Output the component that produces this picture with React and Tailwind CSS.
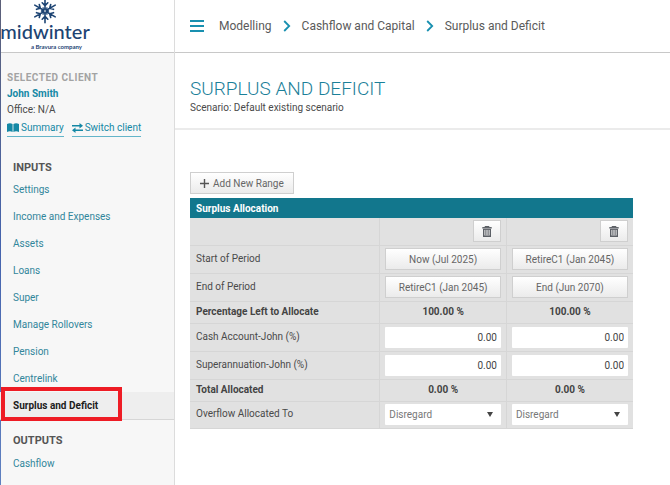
import { useState } from 'react';
import clsx from 'clsx';

const inputLinks = [
  'Settings',
  'Income and Expenses',
  'Assets',
  'Loans',
  'Super',
  'Manage Rollovers',
  'Pension',
  'Centrelink',
  'Surplus and Deficit',
];

const initialRanges = [
  { id: 1, start: 'Now (Jul 2025)', end: 'RetireC1 (Jan 2045)' },
  { id: 2, start: 'RetireC1 (Jan 2045)', end: 'End (Jun 2070)' },
];

const buttonStyle =
  'flex h-[22px] items-center justify-center border border-[#cfcfcf] bg-linear-to-b from-white to-[#ebebeb] text-[#666]';
const fieldStyle = 'block h-[21px] w-full rounded-[1px] bg-white text-[10px]';

function Snowflake() {
  return (
    <svg viewBox="0 0 26 26" className="h-[26px] w-[26px]" fill="none" stroke="#1d4473" strokeWidth="1.6" strokeLinecap="round">
      {[0, 60, 120, 180, 240, 300].map((angle) => (
        <g key={angle} transform={`rotate(${angle} 13 13)`}>
          <path d="M13 11.5V1.2M13 7.600l-2.800-2.800M13 7.600l2.800-2.800" />
          <path d="M13 11.500l-1.600-1.800M13 11.500l1.600-1.800" strokeWidth="1" />
        </g>
      ))}
    </svg>
  );
}

function BookIcon() {
  return (
    <svg viewBox="0 0 12 10" className="h-[10px] w-3" fill="#1488a5">
      <path d="M0 1Q3-.4 5.6 1v8Q3 7.700 0 9zM6.400 1Q9-.4 12 1v8Q9 7.700 6.400 9z" />
    </svg>
  );
}

function SwapIcon() {
  return (
    <svg viewBox="0 0 11 10" className="h-[10px] w-[11px]" fill="#1488a5">
      <path d="M0 2h7.500V0L11 2.700 7.500 5.400V3.400H0zM11 6.600H3.500V4.600L0 7.300 3.500 10V8H11z" />
    </svg>
  );
}

function TrashIcon() {
  return (
    <svg viewBox="0 0 10 11" className="h-[11px] w-[10px]" fill="none" stroke="#5c6066">
      <path d="M.3 1.800h9.400" strokeWidth="1.500" />
      <path d="M3 1.300V.5h4v.8" />
      <path d="M1.700 3v7.200h6.600V3" strokeWidth="1.400" />
      <path d="M3.900 3.500v6M6.100 3.500v6" strokeWidth="1.100" />
      <path d="M1.200 3.400h7.600" />
    </svg>
  );
}

function Chevron() {
  return (
    <svg viewBox="0 0 8 12" className="h-3 w-2" fill="none" stroke="#1990b0" strokeWidth="1.8">
      <path d="M1.200 1l5 5-5 5" />
    </svg>
  );
}

function Sidebar() {
  return (
    <aside className="flex w-[175px] shrink-0 flex-col border-r border-[#dcdcdc] bg-[#f7f7f7]">
      <div className="h-[53px] overflow-hidden border-b border-[#c8c8c8] bg-white">
        <a href="#home" aria-label="midwinter" className="flex w-[90px] flex-col items-center text-[#1d4473]">
          <span className="-mt-[2px] h-[22px]">
            <Snowflake />
          </span>
          <span className="font-['Lato',sans-serif] text-[20px] leading-[23px] font-medium">midwinter</span>
          <span className="self-end pr-2 font-['Lato',sans-serif] text-[6px] leading-[7px] font-bold">a Bravura company</span>
        </a>
      </div>

      <div className="pt-[17px] pl-[7px] leading-4">
        <h2 className="font-bold tracking-wider text-[#a3a3a3]">SELECTED CLIENT</h2>
        <p className="font-bold text-[#1488a5]">John Smith</p>
        <p>Office: N/A</p>
        <div className="mt-[2px] flex gap-2 text-[#1488a5]">
          <a href="#summary" className="flex items-center gap-[2px] border-b border-[#63b5c9]">
            <BookIcon />
            Summary
          </a>
          <a href="#switch" className="flex items-center gap-[2px] border-b border-[#63b5c9]">
            <SwapIcon />
            Switch client
          </a>
        </div>
      </div>

      <nav className="pt-[23px]">
        <h2 className="pl-[13px] text-[11px] leading-4 font-bold text-[#555]">INPUTS</h2>
        <ul>
          {inputLinks.map((label) => {
            const active = label === 'Surplus and Deficit';
            return (
              <li key={label} className={clsx('relative', active && 'border-b border-[#d6d6d6] bg-[#eeeeee]')}>
                <a
                  href="#inputs"
                  className={clsx(
                    'flex h-[27px] items-center pl-[13px]',
                    active ? 'font-bold text-[#1c1c1c]' : 'text-[#31869b]'
                  )}
                >
                  {label}
                </a>
                {active && (
                  <span className="pointer-events-none absolute -top-[5px] left-px h-[34px] w-[121px] border-4 border-[#ee1c25]" />
                )}
              </li>
            );
          })}
        </ul>
        <h2 className="pt-[13px] pl-[13px] text-[11px] leading-4 font-bold text-[#555]">OUTPUTS</h2>
        <a href="#cashflow" className="flex h-7 items-center pl-[13px] text-[#31869b]">
          Cashflow
        </a>
      </nav>
    </aside>
  );
}

function Breadcrumbs() {
  return (
    <header className="flex h-[53px] items-center border-b border-[#c8c8c8] pl-[15px]">
      <button type="button" aria-label="Menu" className="mr-[15px] flex w-[14px] flex-col gap-[3px]">
        <span className="h-[2px] bg-[#1990b0]" />
        <span className="h-[2px] bg-[#1990b0]" />
        <span className="h-[2px] bg-[#1990b0]" />
      </button>
      <nav className="flex items-center gap-[11px] text-[12px] text-[#5a5a5a]">
        <a href="#modelling">Modelling</a>
        <Chevron />
        <a href="#capital">Cashflow and Capital</a>
        <Chevron />
        <a href="#surplus">Surplus and Deficit</a>
      </nav>
    </header>
  );
}

function Row({ label, bold, ranges, height = 'h-7', children }) {
  return (
    <tr className={clsx('border-b border-[#d6d6d6]', height, bold && 'font-bold text-[#444]')}>
      <th scope="row" className={clsx('border-r border-[#d6d6d6] px-[6px] pb-[2px] text-left', !bold && 'font-normal')}>
        {label}
      </th>
      {ranges.map((range) => (
        <td key={range.id} className={clsx('border-r border-[#d6d6d6] px-[5px] text-center last:border-r-0', bold && 'pb-[2px]')}>
          {children(range)}
        </td>
      ))}
    </tr>
  );
}

function AllocationTable({ ranges, onRemove }) {
  return (
    <table className="mt-1 w-full max-w-[443px] table-fixed border-collapse bg-[#e1e1e1]">
      <colgroup>
        <col className="w-3/7" />
        <col />
        <col />
      </colgroup>
      <thead>
        <tr className="h-5 bg-[#12778d] text-white">
          <th colSpan={3} className="px-[6px] text-left font-bold">
            Surplus Allocation
          </th>
        </tr>
      </thead>
      <tbody>
        <Row label="" ranges={ranges} height="h-[27px]">
          {(range) => (
            <button
              type="button"
              aria-label="Delete range"
              onClick={() => onRemove(range.id)}
              className={clsx(buttonStyle, 'ml-auto w-7')}
            >
              <TrashIcon />
            </button>
          )}
        </Row>
        <Row label="Start of Period" ranges={ranges}>
          {(range) => (
            <button type="button" className={clsx(buttonStyle, 'w-full')}>
              {range.start}
            </button>
          )}
        </Row>
        <Row label="End of Period" ranges={ranges}>
          {(range) => (
            <button type="button" className={clsx(buttonStyle, 'w-full')}>
              {range.end}
            </button>
          )}
        </Row>
        <Row label="Percentage Left to Allocate" ranges={ranges} height="h-[22px]" bold>
          {() => '100.00 %'}
        </Row>
        {['Cash Account-John (%)', 'Superannuation-John (%)'].map((account) => (
          <Row key={account} label={account} ranges={ranges}>
            {() => (
              <input
                type="text"
                aria-label={account}
                defaultValue="0.00"
                className={clsx(fieldStyle, 'px-1 text-right text-[#444]')}
              />
            )}
          </Row>
        ))}
        <Row label="Total Allocated" ranges={ranges} height="h-[22px]" bold>
          {() => '0.00 %'}
        </Row>
        <Row label="Overflow Allocated To" ranges={ranges} height="h-[27px]">
          {() => (
            <div className="relative">
              <select
                aria-label="Overflow Allocated To"
                className={clsx(fieldStyle, 'appearance-none px-1 text-[#777]')}
              >
                <option>Disregard</option>
              </select>
              <svg viewBox="0 0 6 5" className="pointer-events-none absolute top-2 right-2 h-[5px] w-[6px]" fill="#444">
                <path d="M0 0h6L3 5z" />
              </svg>
            </div>
          )}
        </Row>
      </tbody>
    </table>
  );
}

export default function App() {
  const [ranges, setRanges] = useState(initialRanges);

  const addRange = () => {
    setRanges([...ranges, { id: Date.now(), start: 'Now (Jul 2025)', end: 'End (Jun 2070)' }]);
  };

  const removeRange = (id) => {
    setRanges(ranges.filter((range) => range.id !== id));
  };

  return (
    <div className="relative flex min-h-screen bg-white font-['Roboto',sans-serif] text-[10px] text-[#4a4a4a]">
      <div className="absolute inset-y-0 left-0 w-px bg-linear-to-b from-[#5c6078] via-[#4563ad] to-[#5f80c0]" />
      <Sidebar />
      <div className="min-w-0 flex-1">
        <Breadcrumbs />
        <section className="border-b-2 border-[#ebebeb] pt-6 pb-[13px] pl-[15px]">
          <h1 className="text-[19px] leading-6 font-light text-[#1b8099]">SURPLUS AND DEFICIT</h1>
          <p className="leading-[14px]">Scenario: Default existing scenario</p>
        </section>
        <main className="pt-[42px] pr-[37px] pl-[15px]">
          <button type="button" onClick={addRange} className={clsx(buttonStyle, 'gap-1 px-[9px]')}>
            <svg viewBox="0 0 9 9" className="h-[9px] w-[9px]" stroke="#555" strokeWidth="1.4">
              <path d="M4.500 0v9M0 4.500h9" />
            </svg>
            Add New Range
          </button>
          <AllocationTable ranges={ranges} onRemove={removeRange} />
        </main>
      </div>
    </div>
  );
}
